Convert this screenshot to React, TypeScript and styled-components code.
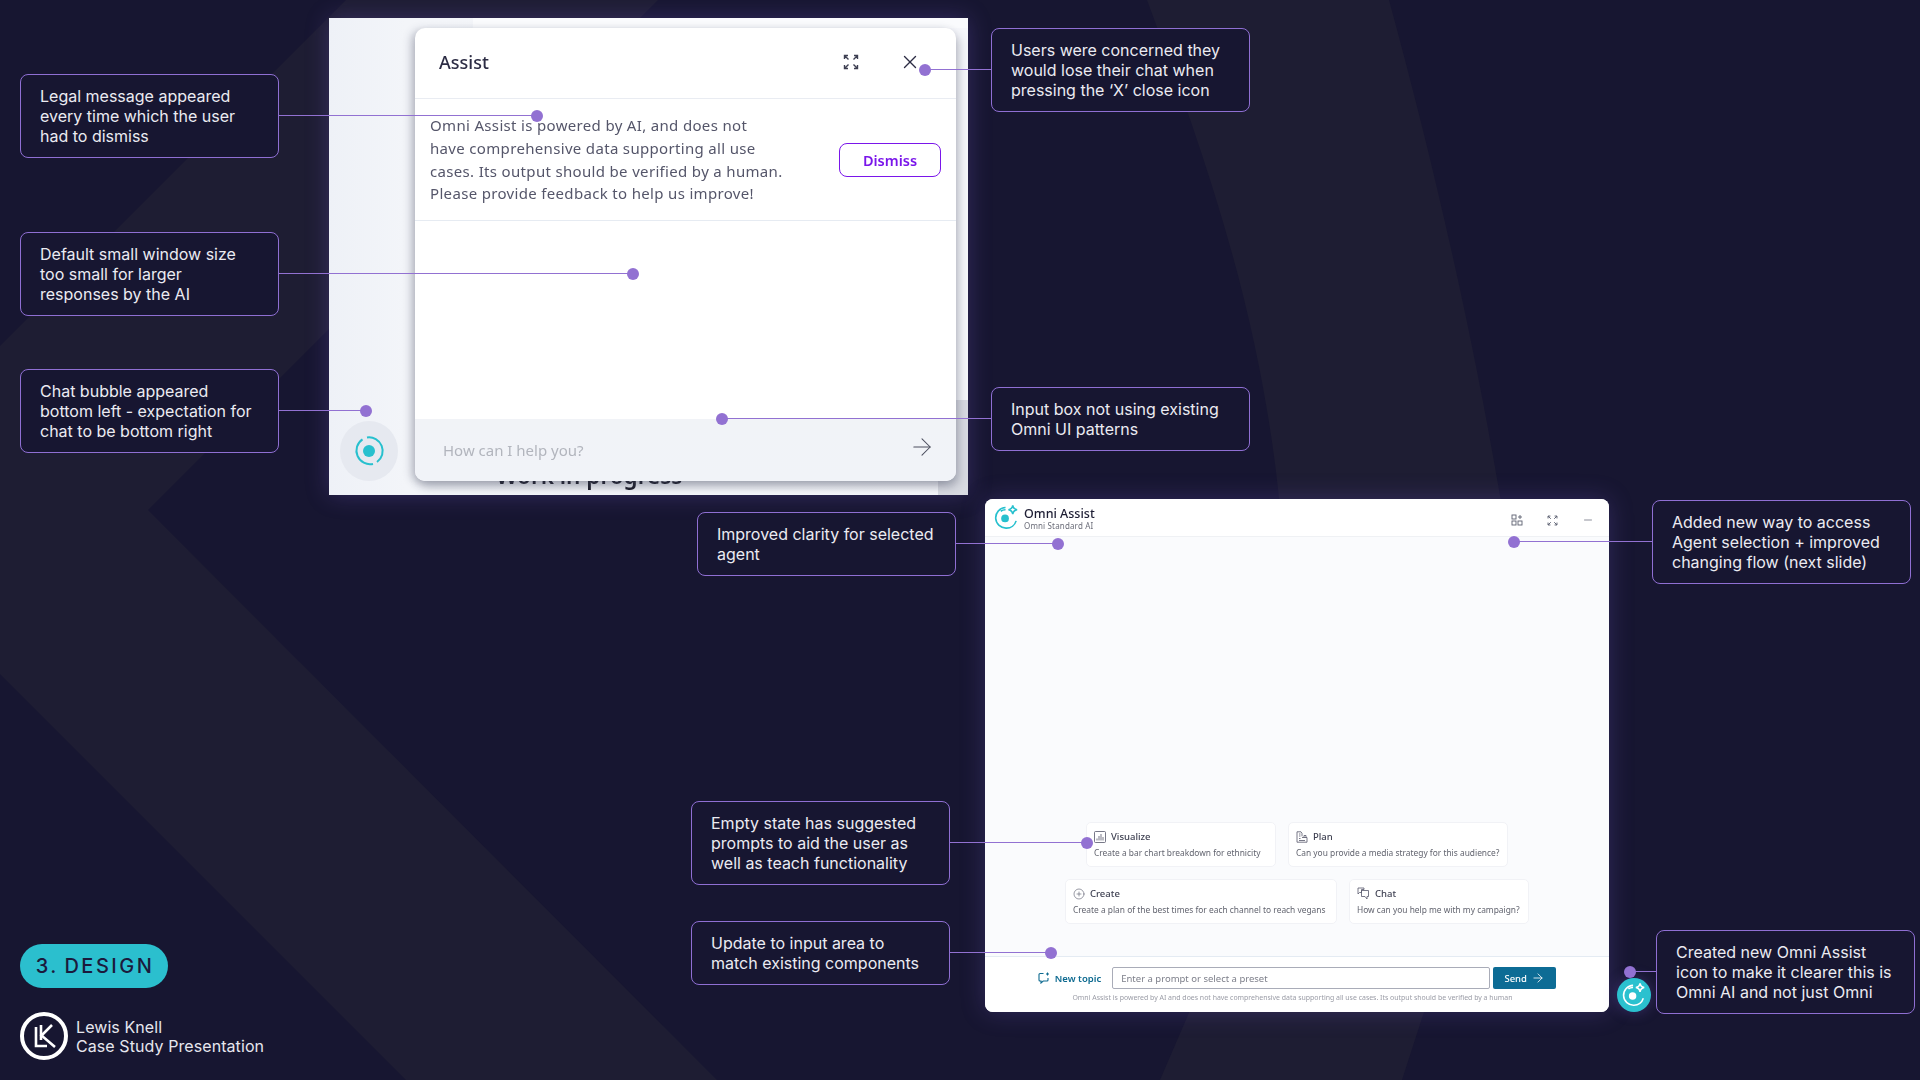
import React from "react";
import styled, { createGlobalStyle } from "styled-components";
import { ArrowRight, CirclePlus, Minus, X } from "lucide-react";

const GlobalStyle = createGlobalStyle`
    html, body {
        margin: 0;
        padding: 0;
        background: #171631;
    }
    * {
        box-sizing: border-box;
    }
`;

const Slide = styled.div`
    position: relative;
    width: 1920px;
    height: 1080px;
    overflow: hidden;
    background: #171631;
    font-family: "Inter", "Liberation Sans", sans-serif;
    display: flex;
    flex-direction: column;
    justify-content: flex-end;
    align-items: flex-start;
    gap: 24px;
    padding: 0 0 20px 20px;
`;

const Backdrop = styled.svg`
    position: absolute;
    inset: 0;
    width: 1920px;
    height: 1080px;
`;

/* ---------- callouts, they sit on the slide like pins ---------- */

const Note = styled.div<{ $x: number; $y: number; $w: number; $h: number }>`
    position: absolute;
    left: ${(p) => p.$x}px;
    top: ${(p) => p.$y}px;
    width: ${(p) => p.$w}px;
    height: ${(p) => p.$h}px;
    display: flex;
    align-items: center;
    padding: 0 0 0 19px;
    background: #171631;
    border: 1px solid #8f6fd3;
    border-radius: 8px;
    color: #ebebf2;
    font-size: 16px;
    line-height: 20px;
    white-space: nowrap;
    z-index: 4;
`;

const Connector = styled.div<{ $x: number; $y: number; $w: number }>`
    position: absolute;
    left: ${(p) => p.$x}px;
    top: ${(p) => p.$y}px;
    width: ${(p) => p.$w}px;
    height: 1px;
    background: #9271d2;
    z-index: 3;
`;

const Dot = styled.span<{ $side: "left" | "right" }>`
    position: absolute;
    top: -5.5px;
    ${(p) => (p.$side === "left" ? "left: -6px;" : "right: -6px;")}
    width: 12px;
    height: 12px;
    border-radius: 50%;
    background: #9271d2;
`;

/* ---------- old design ---------- */

const OldShot = styled.div`
    position: absolute;
    left: 329px;
    top: 18px;
    width: 639px;
    height: 477px;
    overflow: hidden;
    background: linear-gradient(90deg, #eef1f7 0%, #f3f5f9 12%, #f6f7fb 100%);
    box-shadow: 0 0 22px rgba(120, 92, 205, 0.3);
    filter: blur(0.35px);
`;

const TopBand = styled.div`
    position: absolute;
    left: 144px;
    right: 0;
    top: 0;
    height: 10px;
    background: #fafbfd;
`;

const SideShade = styled.div`
    position: absolute;
    right: 0;
    top: 382px;
    width: 30px;
    bottom: 0;
    background: #d9dbe2;
`;

const BehindText = styled.div`
    position: absolute;
    left: 167px;
    top: 443px;
    color: #1c1c28;
    font-family: "Noto Sans", sans-serif;
    font-size: 22.5px;
    font-weight: 600;
    line-height: 30px;
    white-space: nowrap;
`;

const Bubble = styled.div`
    position: absolute;
    left: 11px;
    top: 403px;
    width: 58px;
    height: 60px;
    border-radius: 50%;
    background: #e6e9f0;
    display: flex;
    align-items: center;
    justify-content: center;
`;

const Modal = styled.div`
    position: absolute;
    left: 86px;
    top: 10px;
    width: 541px;
    height: 453px;
    display: flex;
    flex-direction: column;
    background: #ffffff;
    border-radius: 10px;
    overflow: hidden;
    font-family: "Noto Sans", "Open Sans", sans-serif;
    box-shadow: -4px 2px 8px rgba(60, 65, 90, 0.28), 3px 6px 10px rgba(60, 65, 90, 0.3);
`;

const ModalHeader = styled.div`
    height: 71px;
    flex: none;
    display: flex;
    align-items: center;
    padding: 0 24px 2px;
    border-bottom: 1px solid #e9ecf2;
    color: #2c2c44;
`;

const ModalTitle = styled.div`
    flex: 1;
    font-size: 18px;
    font-weight: 500;
`;

const ModalTools = styled.div`
    display: flex;
    align-items: center;
    gap: 40px;
    margin-right: 11px;
    svg {
        display: block;
    }
`;

const Legal = styled.div`
    flex: none;
    height: 122px;
    display: flex;
    align-items: center;
    justify-content: space-between;
    padding: 0 15px;
    border-bottom: 1px solid #e6ebf2;
`;

const LegalText = styled.div`
    width: 300px;
    color: #55566a;
    font-size: 15px;
    line-height: 22.8px;
    letter-spacing: 0.33px;
    white-space: nowrap;
`;

const DismissButton = styled.button`
    width: 102px;
    height: 34px;
    padding: 0;
    background: #ffffff;
    border: 1.5px solid #7a16ea;
    border-radius: 8px;
    color: #7a16ea;
    font-family: inherit;
    font-size: 14.5px;
    font-weight: 600;
`;

const ModalBody = styled.div`
    flex: 1;
`;

const ModalInput = styled.div`
    flex: none;
    height: 62px;
    display: flex;
    align-items: center;
    justify-content: space-between;
    padding: 0 20px 0 28px;
    background: linear-gradient(180deg, #f1f3f7, #f1f3f8);
    color: #b2b5bd;
    font-size: 15px;
    svg {
        color: #4c4e5e;
        margin-bottom: 6px;
    }
`;

/* ---------- new design ---------- */

const NewShot = styled.div`
    position: absolute;
    left: 985px;
    top: 499px;
    width: 624px;
    height: 513px;
    display: flex;
    flex-direction: column;
    background: #fafbfd;
    border-radius: 8px;
    overflow: hidden;
    font-family: "Noto Sans", "Open Sans", sans-serif;
    box-shadow: 0 0 24px rgba(120, 92, 205, 0.28);
    filter: blur(0.3px);
`;

const NewHeader = styled.div`
    height: 38px;
    flex: none;
    display: flex;
    align-items: center;
    gap: 4px;
    padding: 0 15px 0 8px;
    background: #ffffff;
    border-bottom: 1px solid #eff1f4;
`;

const Brand = styled.div`
    flex: 1;
    display: flex;
    flex-direction: column;
    margin-top: 2px;
`;

const BrandName = styled.div`
    color: #1d1d33;
    font-size: 12.5px;
    font-weight: 500;
    line-height: 15px;
`;

const BrandSub = styled.div`
    color: #6a6c78;
    font-size: 8px;
    line-height: 10px;
    letter-spacing: 0.15px;
`;

const HeaderTools = styled.div`
    display: flex;
    align-items: center;
    gap: 24px;
    margin-top: 5px;
    color: #5c6070;
    svg {
        display: block;
    }
`;

const Prompts = styled.div`
    flex: 1;
    display: flex;
    flex-direction: column;
    justify-content: flex-end;
    align-items: center;
    gap: 12px;
    padding-bottom: 32px;
`;

const PromptRow = styled.div`
    display: flex;
    gap: 12px;
`;

const PromptCard = styled.div<{ $w: number }>`
    width: ${(p) => p.$w}px;
    height: 45px;
    padding: 6px 7px 0;
    background: #ffffff;
    border: 1px solid #f1f2f6;
    border-radius: 5px;
`;

const PromptTitle = styled.div`
    display: flex;
    align-items: center;
    gap: 5px;
    height: 15px;
    color: #3f4152;
    font-size: 9.5px;
    font-weight: 500;
    svg {
        display: block;
        flex: none;
        color: #55576a;
    }
`;

const PromptText = styled.div`
    margin-top: 3px;
    color: #62646f;
    font-size: 8.4px;
    line-height: 11px;
    white-space: nowrap;
`;

const Footer = styled.div`
    flex: none;
    height: 56px;
    display: flex;
    flex-direction: column;
    align-items: center;
    padding-top: 10px;
    background: #ffffff;
    border-top: 1px solid #e4ebf3;
`;

const InputRow = styled.div`
    display: flex;
    align-items: center;
    height: 22px;
`;

const NewTopic = styled.div`
    display: flex;
    align-items: center;
    gap: 5px;
    margin-right: 11px;
    color: #0d6a90;
    font-size: 9.5px;
    font-weight: 600;
    svg {
        display: block;
    }
`;

const PromptInput = styled.div`
    width: 378px;
    height: 22px;
    display: flex;
    align-items: center;
    padding-left: 8px;
    margin-right: 3px;
    border: 1px solid #a9acb8;
    border-radius: 2px;
    color: #7d7f8a;
    font-size: 9.5px;
`;

const SendButton = styled.div`
    width: 63px;
    height: 22px;
    display: flex;
    align-items: center;
    justify-content: center;
    gap: 4px;
    border-radius: 2px;
    background: #0d6c95;
    color: #ffffff;
    font-size: 9.5px;
    font-weight: 500;
`;

const Disclaimer = styled.div`
    margin: 3px 9px 0 0;
    color: #9a9ca6;
    font-size: 6.95px;
    line-height: 11px;
    white-space: nowrap;
`;

const AssistButton = styled.div`
    position: absolute;
    left: 1617px;
    top: 978px;
    width: 34px;
    height: 34px;
    border-radius: 50%;
    background: #2bc1cf;
    display: flex;
    align-items: center;
    justify-content: center;
    box-shadow: 0 0 14px rgba(120, 92, 205, 0.35);
    z-index: 2;
`;

/* ---------- bottom left ---------- */

const Chapter = styled.div`
    position: relative;
    width: 148px;
    height: 44px;
    padding-left: 2px;
    border-radius: 22px;
    background: #2bbfce;
    color: #1b1a3c;
    display: flex;
    align-items: center;
    justify-content: center;
    font-size: 20px;
    font-weight: 500;
    letter-spacing: 2.5px;
    word-spacing: -2px;
`;

const Signature = styled.div`
    position: relative;
    display: flex;
    align-items: center;
    gap: 8px;
    color: #e6e6ee;
    font-size: 16px;
    line-height: 19px;
    letter-spacing: 0.08px;
    svg {
        display: block;
    }
`;

const SignatureText = styled.div`
    margin-top: 2px;
`;

const notes = [
    { x: 20, y: 74, w: 259, h: 84, lines: ["Legal message appeared", "every time which the user", "had to dismiss"] },
    { x: 20, y: 232, w: 259, h: 84, lines: ["Default small window size", "too small for larger", "responses by the AI"] },
    { x: 20, y: 369, w: 259, h: 84, lines: ["Chat bubble appeared", "bottom left - expectation for", "chat to be bottom right"] },
    { x: 991, y: 28, w: 259, h: 84, lines: ["Users were concerned they", "would lose their chat when", "pressing the ‘X’ close icon"] },
    { x: 991, y: 387, w: 259, h: 64, lines: ["Input box not using existing", "Omni UI patterns"] },
    { x: 697, y: 512, w: 259, h: 64, lines: ["Improved clarity for selected", "agent"] },
    { x: 1652, y: 500, w: 259, h: 84, lines: ["Added new way to access", "Agent selection + improved", "changing flow (next slide)"] },
    { x: 691, y: 801, w: 259, h: 84, lines: ["Empty state has suggested", "prompts to aid the user as", "well as teach functionality"] },
    { x: 691, y: 921, w: 259, h: 64, lines: ["Update to input area to", "match existing components"] },
    { x: 1656, y: 930, w: 259, h: 84, lines: ["Created new Omni Assist", "icon to make it clearer this is", "Omni AI and not just Omni"] },
];

const links: { x: number; y: number; w: number; side: "left" | "right" }[] = [
    { x: 278, y: 115, w: 259, side: "right" },
    { x: 278, y: 273, w: 355, side: "right" },
    { x: 278, y: 410, w: 88, side: "right" },
    { x: 925, y: 69, w: 66, side: "left" },
    { x: 722, y: 418, w: 269, side: "left" },
    { x: 955, y: 543, w: 103, side: "right" },
    { x: 1514, y: 541, w: 138, side: "left" },
    { x: 949, y: 842, w: 138, side: "right" },
    { x: 949, y: 952, w: 102, side: "right" },
    { x: 1630, y: 971, w: 26, side: "left" },
];

const ExpandIcon = ({ size, color }: { size: number; color: string }) => (
    <svg width={size} height={size} viewBox="0 0 16 16" fill="none" stroke={color} strokeWidth="1.4">
        <path d="M1.5 5V1.5H5M1.5 1.5l4 4" />
        <path d="M11 1.5h3.5V5M14.5 1.5l-4 4" />
        <path d="M1.5 11v3.5H5M1.5 14.5l4-4" />
        <path d="M11 14.5h3.5V11M14.5 14.5l-4-4" />
    </svg>
);

const AgentsIcon = () => (
    <svg width="12" height="12" viewBox="0 0 12 12" fill="none" stroke="currentColor" strokeWidth="0.9">
        <rect x="1" y="1" width="4" height="4" />
        <rect x="1" y="7" width="4" height="4" />
        <rect x="7" y="7" width="4" height="4" />
        <path d="M9 1v4M7 3h4" />
    </svg>
);

const OldOmniIcon = () => (
    <svg width="32" height="32" viewBox="0 0 32 32" fill="none" stroke="#27c0ce" strokeWidth="2">
        <path d="M14 2.5A13.6 13.6 0 0 1 24 27" />
        <path d="M20 28.9A13.6 13.6 0 0 1 9.5 4.3" />
        <circle cx="16" cy="16" r="6" fill="#27c0ce" stroke="none" />
    </svg>
);

const NewOmniIcon = ({ color, size }: { color: string; size: number }) => (
    <svg width={size} height={size} viewBox="0 0 28 28" fill="none" stroke={color} strokeWidth="1.7">
        <path d="M13 3.6A10.5 10.5 0 0 0 14 25a10.5 10.5 0 0 0 10-7.5" />
        <path d="M8 7.5A8 8 0 0 1 13 6" />
        <circle cx="12.5" cy="15" r="4" fill={color} stroke="none" />
        <path d="M20.5 1.5c.5 3 1.5 4 4.5 4.5-3 .5-4 1.5-4.5 4.5-.5-3-1.5-4-4.5-4.5 3-.5 4-1.5 4.5-4.5z" />
    </svg>
);

const ChartIcon = () => (
    <svg width="12" height="12" viewBox="0 0 12 12" fill="none" stroke="currentColor" strokeWidth="0.8">
        <rect x="0.5" y="0.5" width="11" height="11" rx="1" />
        <path d="M3 9.5V7.5M5 9.5V5M7 9.5V3M9 9.5V6" />
    </svg>
);

const PlanIcon = () => (
    <svg width="12" height="12" viewBox="0 0 12 12" fill="none" stroke="currentColor" strokeWidth="0.8">
        <path d="M1 .8h4l1 1.5v3M1 .8v10.4h10V6.5H6" />
        <path d="M3 3h1.5M3 5h1.5M3 7.5h1.5M3 9.5h6M8 6.5v-2h2v2" />
    </svg>
);

const ChatsIcon = () => (
    <svg width="13" height="13" viewBox="0 0 13 13" fill="none" stroke="currentColor" strokeWidth="0.8">
        <path d="M1 1h6v1.5H4.5v3H2.5L1 7z" />
        <path d="M4.5 3.5h7v6H10V12L8 9.5H4.5z" />
    </svg>
);

const NewTopicIcon = () => (
    <svg width="12" height="12" viewBox="0 0 12 12" fill="none" stroke="currentColor" strokeWidth="1.1">
        <path d="M5.5 1.5H2a1 1 0 0 0-1 1V8a1 1 0 0 0 1 1h1v2l2.2-2H9a1 1 0 0 0 1-1V6" />
        <path d="M9.5 .5v3M8 2h3" />
    </svg>
);

const LogoMark = () => (
    <svg width="48" height="48" viewBox="0 0 48 48" fill="none" stroke="#ffffff">
        <circle cx="24" cy="24" r="22" strokeWidth="4" />
        <path d="M16 15v19h11" strokeWidth="2.6" />
        <path d="M21 13v15" strokeWidth="2.6" />
        <path d="M32 13L21.5 23.5 35 35" strokeWidth="2.6" />
    </svg>
);

const App = () => (
    <Slide>
        <GlobalStyle />
        <Backdrop viewBox="0 0 1920 1080">
            <polygon points="346,0 0,346 0,674 406,1080 717,1080 148,510 658,0" fill="#1e1d33" />
            <path
                d="M1147 0C1210 170 1275 350 1285 580C1292 760 1250 870 1188 1015L1160 1080H1402L1423 1015C1500 850 1530 650 1499 490C1470 320 1430 150 1389 0Z"
                fill="#1e1d33"
            />
        </Backdrop>

        <OldShot>
            <TopBand />
            <SideShade />
            <BehindText>Work in progress</BehindText>
            <Bubble>
                <OldOmniIcon />
            </Bubble>
            <Modal>
                <ModalHeader>
                    <ModalTitle>Assist</ModalTitle>
                    <ModalTools>
                        <ExpandIcon size={16} color="#3d3f52" />
                        <X size={22} strokeWidth={1.5} />
                    </ModalTools>
                </ModalHeader>
                <Legal>
                    <LegalText>
                        Omni Assist is powered by AI, and does not
                        <br />
                        have comprehensive data supporting all use
                        <br />
                        cases. Its output should be verified by a human.
                        <br />
                        Please provide feedback to help us improve!
                    </LegalText>
                    <DismissButton>Dismiss</DismissButton>
                </Legal>
                <ModalBody />
                <ModalInput>
                    How can I help you?
                    <ArrowRight size={28} strokeWidth={0.9} />
                </ModalInput>
            </Modal>
        </OldShot>

        <NewShot>
            <NewHeader>
                <NewOmniIcon color="#27c0ce" size={27} />
                <Brand>
                    <BrandName>Omni Assist</BrandName>
                    <BrandSub>Omni Standard AI</BrandSub>
                </Brand>
                <HeaderTools>
                    <AgentsIcon />
                    <ExpandIcon size={11} color="#5c6070" />
                    <Minus size={12} strokeWidth={1.4} />
                </HeaderTools>
            </NewHeader>
            <Prompts>
                <PromptRow>
                    <PromptCard $w={190}>
                        <PromptTitle>
                            <ChartIcon />
                            Visualize
                        </PromptTitle>
                        <PromptText>Create a bar chart breakdown for ethnicity</PromptText>
                    </PromptCard>
                    <PromptCard $w={220}>
                        <PromptTitle>
                            <PlanIcon />
                            Plan
                        </PromptTitle>
                        <PromptText>Can you provide a media strategy for this audience?</PromptText>
                    </PromptCard>
                </PromptRow>
                <PromptRow>
                    <PromptCard $w={272}>
                        <PromptTitle>
                            <CirclePlus size={12} strokeWidth={1.2} />
                            Create
                        </PromptTitle>
                        <PromptText>Create a plan of the best times for each channel to reach vegans</PromptText>
                    </PromptCard>
                    <PromptCard $w={180}>
                        <PromptTitle>
                            <ChatsIcon />
                            Chat
                        </PromptTitle>
                        <PromptText>How can you help me with my campaign?</PromptText>
                    </PromptCard>
                </PromptRow>
            </Prompts>
            <Footer>
                <InputRow>
                    <NewTopic>
                        <NewTopicIcon />
                        New topic
                    </NewTopic>
                    <PromptInput>Enter a prompt or select a preset</PromptInput>
                    <SendButton>
                        Send
                        <ArrowRight size={14} strokeWidth={1.4} />
                    </SendButton>
                </InputRow>
                <Disclaimer>
                    Omni Assist is powered by AI and does not have comprehensive data supporting all use cases. Its
                    output should be verified by a human
                </Disclaimer>
            </Footer>
        </NewShot>

        <AssistButton>
            <NewOmniIcon color="#ffffff" size={26} />
        </AssistButton>

        {links.map((l) => (
            <Connector key={`${l.x}-${l.y}`} $x={l.x} $y={l.y} $w={l.w}>
                <Dot $side={l.side} />
            </Connector>
        ))}

        {notes.map((n) => (
            <Note key={n.lines[0]} $x={n.x} $y={n.y} $w={n.w} $h={n.h}>
                <div>
                    {n.lines.map((line) => (
                        <div key={line}>{line}</div>
                    ))}
                </div>
            </Note>
        ))}

        <Chapter>3. DESIGN</Chapter>
        <Signature>
            <LogoMark />
            <SignatureText>
                Lewis Knell
                <br />
                Case Study Presentation
            </SignatureText>
        </Signature>
    </Slide>
);

export default App;
